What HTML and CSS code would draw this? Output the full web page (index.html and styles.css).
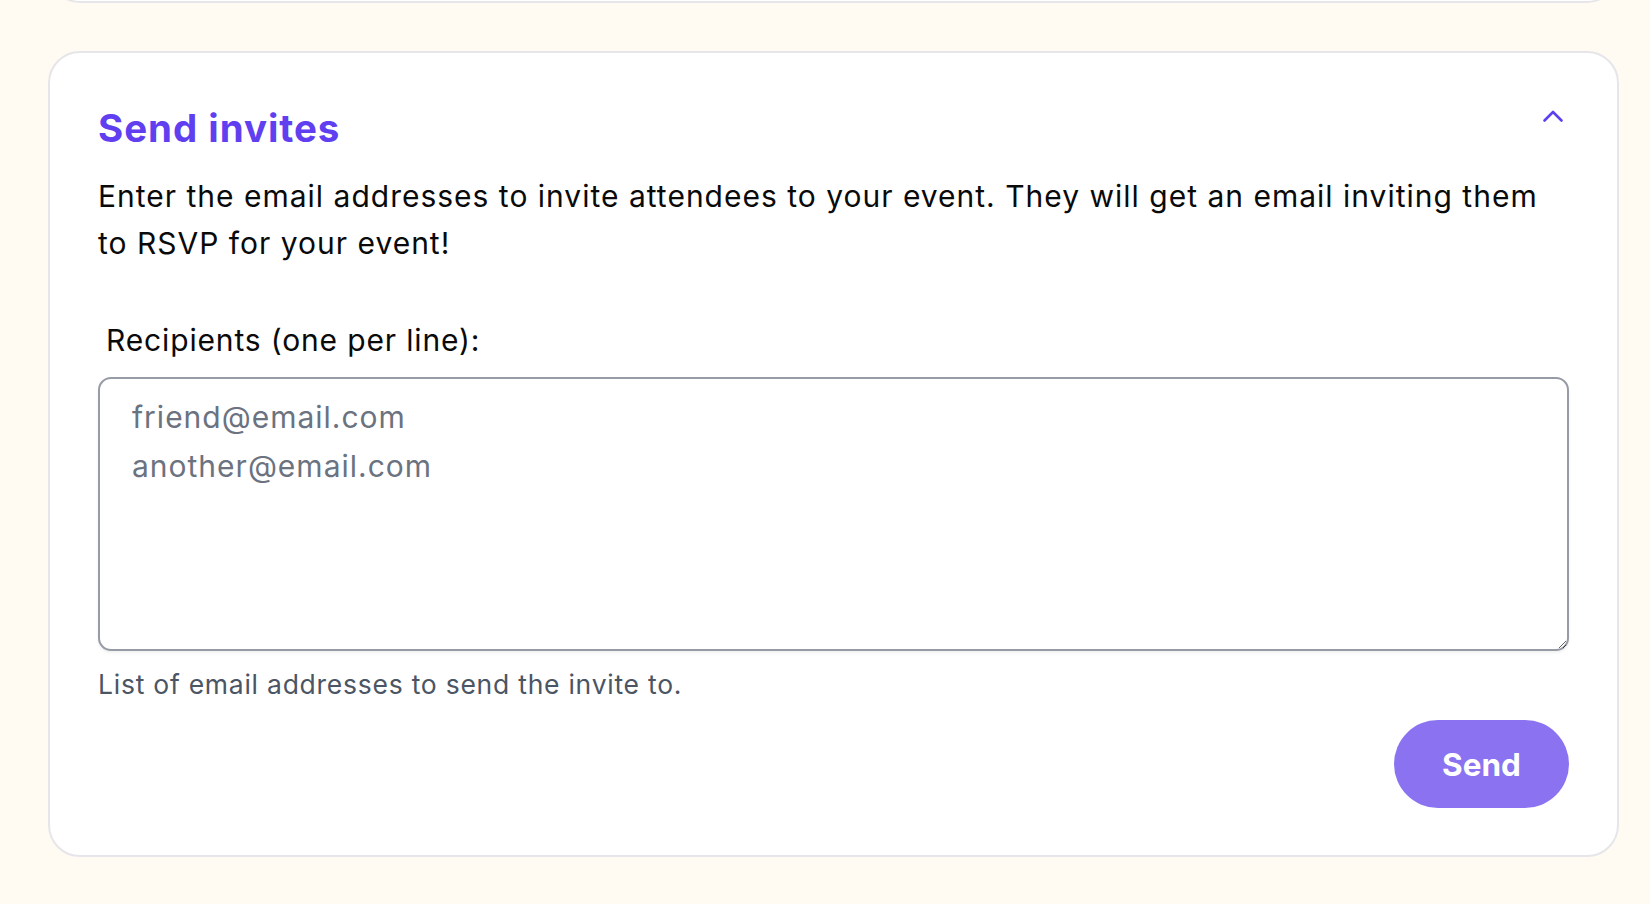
FILE: index.html
```html
<!DOCTYPE html>
<html lang="en">
<head>
<meta charset="utf-8">
<title>Send invites</title>
<link rel="stylesheet" href="styles.css">
</head>
<body>
<div class="page">
  <div class="card card-prev"></div>
  <section class="card">
    <div class="card-head">
      <h2 class="title">Send invites</h2>
      <button class="toggle" type="button" aria-label="Collapse">
        <svg width="22" height="14" viewBox="0 0 22 14" fill="none" stroke="currentColor" stroke-width="2.6" stroke-linecap="round" stroke-linejoin="round"><path d="M2.5 11.5 L11 3 L19.5 11.5"/></svg>
      </button>
    </div>
    <p class="desc">Enter the email addresses to invite attendees to your event. They will get an email inviting them to RSVP for your event!</p>
    <form class="form">
      <label class="label" for="recipients">Recipients (one per line):</label>
      <textarea id="recipients" class="input" placeholder="friend@email.com&#10;another@email.com"></textarea>
      <p class="help">List of email addresses to send the invite to.</p>
      <div class="actions">
        <button class="send" type="button">Send</button>
      </div>
    </form>
  </section>
</div>
</body>
</html>
```

FILE: styles.css
```css
html, body {
  margin: 0;
  padding: 0;
  background: #fffbf3;
  overflow: hidden;
}
body {
  font-family: Inter, "Noto Sans", sans-serif;
  color: #0a0a0a;
}
.page {
  width: 1571px;
  padding-left: 48px;
  display: flex;
  flex-direction: column;
  gap: 48px;
}
.card {
  box-sizing: border-box;
  background: #ffffff;
  border: 2px solid #e6e6ea;
  border-radius: 32px;
  padding: 52px 48px 47px 48px;
}
.card-prev {
  height: 200px;
  margin-top: -197px;
}
.card-head {
  display: flex;
  justify-content: space-between;
  align-items: flex-start;
}
.title {
  margin: 0;
  font-size: 38.5px;
  line-height: 46px;
  font-weight: 700;
  color: #603ff0;
  letter-spacing: 0.95px;
}
.toggle {
  border: 0;
  background: none;
  padding: 0;
  margin: 4px 5px 0 0;
  color: #5b3ff0;
  display: flex;
  cursor: pointer;
}
.desc {
  margin: 22px 0 0 0;
  font-size: 30px;
  line-height: 46.6px;
  color: #0a0a0a;
  letter-spacing: 1px;
}
.form {
  display: flex;
  flex-direction: column;
  margin-top: 54px;
}
.label {
  font-size: 30px;
  line-height: 40px;
  padding-left: 8px;
  color: #0a0a0a;
  letter-spacing: 0.85px;
}
.input {
  margin-top: 17px;
  box-sizing: border-box;
  width: 100%;
  height: 274px;
  border: 2px solid #969ba6;
  border-radius: 13px;
  padding: 14px 32px;
  font-family: Inter, "Noto Sans", sans-serif;
  font-size: 30px;
  line-height: 48.7px;
  letter-spacing: 1px;
  color: #111;
  background: #fff;
  box-shadow: 0 2px 3px rgba(0, 0, 0, 0.06);
  outline: none;
}
.input::placeholder {
  color: #6b7280;
  opacity: 1;
}
.help {
  margin: 13px 0 0 0;
  font-size: 26.5px;
  line-height: 40px;
  color: #4b5563;
  letter-spacing: 0.75px;
}
.actions {
  display: flex;
  justify-content: flex-end;
  margin-top: 16px;
}
.send {
  width: 175px;
  height: 88px;
  border: 0;
  border-radius: 44px;
  background: #8a72f1;
  color: #ffffff;
  font-family: Inter, "Noto Sans", sans-serif;
  font-size: 31.5px;
  font-weight: 700;
  cursor: pointer;
}
```
